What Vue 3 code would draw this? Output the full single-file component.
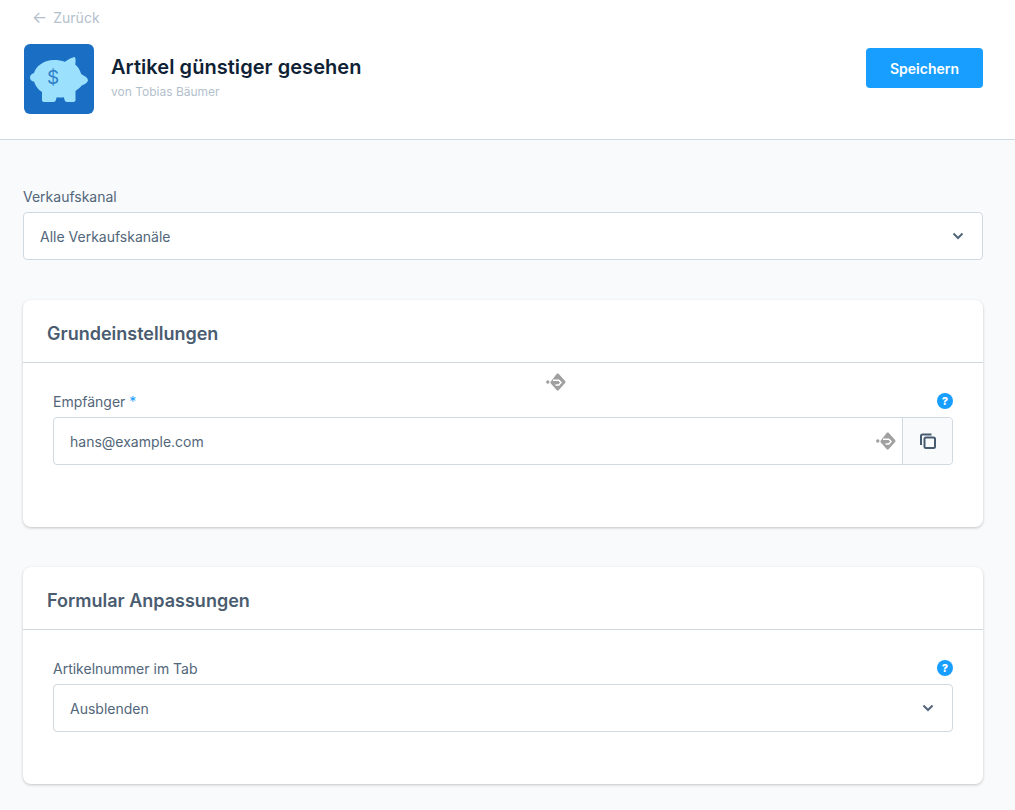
<script setup>
</script>

<template>
  <div class="page">
    <header class="top">
      <a class="back"><span class="arrow">←</span><span>Zurück</span></a>
      <div class="headrow">
        <div class="logo">
          <svg width="70" height="70" viewBox="0 0 70 70">
            <rect width="70" height="70" fill="#1a6fc4" />
            <path fill="#9be1fd" d="M51 13c.8 2.500.7 5 .2 7.500 2.600 2 4.600 5 6 9.500l4 2.500c1.600 1 2.800 2.500 2.800 4-1 3-4 4-6.300 5-1.500 2-3.500 3.500-6.200 5.500V56c0 1.200-.8 2-2 2h-6.500c-1.200 0-1.900-.6-2.300-1.700l-.9-3c-2.200.3-4.800.3-7.100 0l-.9 3c-.4 1.100-1.100 1.700-2.300 1.700H20c-1.200 0-2-.8-2-2v-8c-4-2.500-6.500-6-8-10.500-2.500 0-4-2-4-4s1.500-4 4-4.500c2-7 10-13 20-13 4 0 7.500.5 11 1.800 3-2.300 6-4 10-4.800z" />
            <text x="29" y="40" text-anchor="middle" class="dollar">$</text>
          </svg>
        </div>
        <div class="titles">
          <h1>Artikel günstiger gesehen</h1>
          <p>von Tobias Bäumer</p>
        </div>
        <button class="save">Speichern</button>
      </div>
    </header>

    <main class="content">
      <section class="channel">
        <label class="lbl">Verkaufskanal</label>
        <div class="field">
          <span class="val">Alle Verkaufskanäle</span>
          <svg class="chev" width="12" height="8" viewBox="0 0 12 8"><path d="M1.500 1.500 6 6l4.500-4.500" fill="none" stroke="#52667a" stroke-width="2" /></svg>
        </div>
      </section>

      <section class="card first">
        <h2>Grundeinstellungen</h2>
        <div class="body">
          <svg class="ghost inherit-float" width="20" height="20" viewBox="0 0 20 20"><use href="#inh" /></svg>
          <div class="labelrow">
            <label class="lbl">Empfänger <span class="req">*</span></label>
            <span class="help">?</span>
          </div>
          <div class="field joined">
            <span class="val">hans@example.com</span>
            <svg class="ghost" width="20" height="20" viewBox="0 0 20 20">
              <defs>
                <g id="inh">
                  <circle cx="1.800" cy="10" r="1.700" fill="#a0a0a0" />
                  <path fill="#a0a0a0" d="M10.800 1.800c.5-.5 1.300-.5 1.800 0l6.500 7.200c.5.600.5 1.500 0 2.100l-6.500 7.200c-.5.500-1.300.5-1.800 0l-6-6.700c-.5-.6-.5-1.500 0-2.100z" />
                  <path d="M7 8.300H12.800L15 10.600 12.800 12.900H9.500" fill="none" stroke="#fff" stroke-width="1.500" />
                </g>
              </defs>
              <use href="#inh" />
            </svg>
            <div class="copy">
              <svg width="18" height="18" viewBox="0 0 18 18" fill="none" stroke="#465a70" stroke-width="2">
                <rect x="5.500" y="5.500" width="10.500" height="10.500" rx="1.500" />
                <path d="M12.500 2.500H3.500a1.500 1.500 0 0 0-1.500 1.500v9" />
              </svg>
            </div>
          </div>
        </div>
      </section>

      <section class="card">
        <h2>Formular Anpassungen</h2>
        <div class="body">
          <div class="labelrow">
            <label class="lbl">Artikelnummer im Tab</label>
            <span class="help">?</span>
          </div>
          <div class="field">
            <span class="val">Ausblenden</span>
            <svg class="chev" width="12" height="8" viewBox="0 0 12 8"><path d="M1.500 1.500 6 6l4.500-4.500" fill="none" stroke="#52667a" stroke-width="2" /></svg>
          </div>
        </div>
      </section>
    </main>
  </div>
</template>

<style>
html, body { margin: 0; background: #f9fafc; }
</style>

<style scoped>
.page {
  font-family: Inter, "Liberation Sans", sans-serif;
  color: #52667a;
  background: #f9fafc;
  height: 810px;
  overflow: hidden;
}
.top {
  box-sizing: border-box;
  height: 140px;
  background: #fff;
  border-bottom: 1px solid #d1d9e0;
  padding: 8px 32px 0 24px;
}
.back {
  display: flex;
  align-items: center;
  gap: 6px;
  height: 18px;
  margin-left: 8px;
  font-size: 14px;
  color: #b3bfcc;
}
.arrow { font-size: 16px; line-height: 18px; }
.headrow {
  display: flex;
  align-items: flex-start;
  margin-top: 18px;
}
.logo {
  width: 70px;
  height: 70px;
  border-radius: 6px;
  overflow: hidden;
  flex: none;
}
.logo svg { display: block; }
.dollar {
  font-family: Inter, sans-serif;
  font-size: 19px;
  font-weight: 400;
  fill: #2e7fc9;
}
.titles { margin: 11px 0 0 17px; flex: 1; }
h1 {
  margin: 0;
  font-size: 20px;
  line-height: 24px;
  font-weight: 600;
  letter-spacing: .05px;
  color: #0f2235;
}
.titles p {
  margin: 5px 0 0;
  font-size: 12px;
  line-height: 16px;
  color: #b3bfcc;
}
.save {
  width: 117px;
  height: 40px;
  border: 0;
  border-radius: 4px;
  background: #189eff;
  color: #fff;
  font: 600 14px Inter, sans-serif;
  margin-top: 4px;
}
.content {
  padding: 47px 32px 0 23px;
}
.lbl {
  display: block;
  font-size: 14px;
  line-height: 20px;
  color: #52667a;
}
.channel .lbl { margin-bottom: 5px; }
.req { color: #189eff; }
.field {
  box-sizing: border-box;
  height: 48px;
  display: flex;
  align-items: center;
  background: #fff;
  border: 1px solid #d1d9e0;
  border-radius: 4px;
  padding: 0 18px 0 16px;
  font-size: 14px;
}
.val { flex: 1; color: #52667a; }
.chev { display: block; }
.card {
  background: #fff;
  border-radius: 8px;
  box-shadow: 0 1px 3px rgba(0, 0, 0, .22);
  margin-top: 40px;
}
.card h2 {
  box-sizing: border-box;
  margin: 0;
  height: 63px;
  padding: 0 24px;
  font-size: 18px;
  line-height: 67px;
  font-weight: 600;
  color: #4a5c70;
  border-bottom: 1px solid #d1d9e0;
}
.body {
  position: relative;
  padding: 29px 30px 62px;
  height: 164px;
  box-sizing: border-box;
}
.card:not(.first) .body { height: 154px; }
.labelrow {
  display: flex;
  justify-content: space-between;
  align-items: center;
  height: 20px;
  margin-bottom: 5px;
}
.help {
  width: 16px;
  height: 16px;
  border-radius: 50%;
  background: #189eff;
  color: #fff;
  font-size: 11px;
  font-weight: 800;
  line-height: 16px;
  text-align: center;
  margin-top: -2px;
}
.joined { padding: 0; }
.joined .val { padding-left: 16px; }
.ghost { display: block; flex: none; margin-right: 6px; }
.inherit-float {
  position: absolute;
  left: 523px;
  top: 9px;
  margin: 0;
}
.copy {
  box-sizing: border-box;
  width: 50px;
  height: 46px;
  flex: none;
  display: flex;
  align-items: center;
  justify-content: center;
  background: #f9fafc;
  border-left: 1px solid #d1d9e0;
  border-radius: 0 4px 4px 0;
}
</style>
